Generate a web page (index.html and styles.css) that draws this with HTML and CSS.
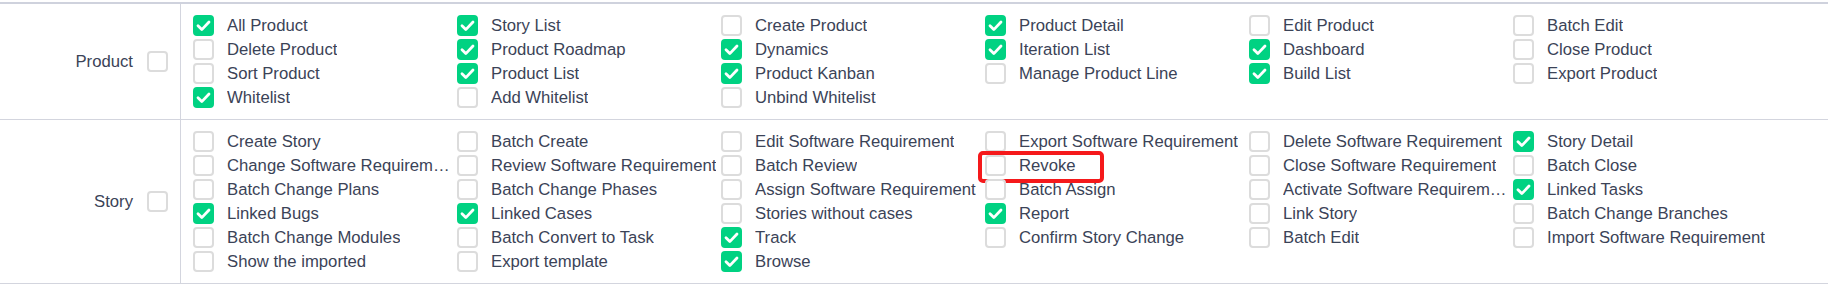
FILE: index.html
```html
<!DOCTYPE html>
<html lang="en">
<head>
  <meta charset="UTF-8" />
  <meta name="viewport" content="width=device-width, initial-scale=1.0"/>
  <title>Privileges</title>
  <link rel="stylesheet" href="styles.css">
</head>
<body>
  <div class="priv-table">
    <div class="priv-row">
      <div class="module">
        <span>Product</span>
        <span class="box"></span>
      </div>
      <div class="items">
        <label class="item on"><span class="box"></span><span class="name">All Product</span></label>
        <label class="item on"><span class="box"></span><span class="name">Story List</span></label>
        <label class="item"><span class="box"></span><span class="name">Create Product</span></label>
        <label class="item on"><span class="box"></span><span class="name">Product Detail</span></label>
        <label class="item"><span class="box"></span><span class="name">Edit Product</span></label>
        <label class="item"><span class="box"></span><span class="name">Batch Edit</span></label>

        <label class="item"><span class="box"></span><span class="name">Delete Product</span></label>
        <label class="item on"><span class="box"></span><span class="name">Product Roadmap</span></label>
        <label class="item on"><span class="box"></span><span class="name">Dynamics</span></label>
        <label class="item on"><span class="box"></span><span class="name">Iteration List</span></label>
        <label class="item on"><span class="box"></span><span class="name">Dashboard</span></label>
        <label class="item"><span class="box"></span><span class="name">Close Product</span></label>

        <label class="item"><span class="box"></span><span class="name">Sort Product</span></label>
        <label class="item on"><span class="box"></span><span class="name">Product List</span></label>
        <label class="item on"><span class="box"></span><span class="name">Product Kanban</span></label>
        <label class="item"><span class="box"></span><span class="name">Manage Product Line</span></label>
        <label class="item on"><span class="box"></span><span class="name">Build List</span></label>
        <label class="item"><span class="box"></span><span class="name">Export Product</span></label>

        <label class="item on"><span class="box"></span><span class="name">Whitelist</span></label>
        <label class="item"><span class="box"></span><span class="name">Add Whitelist</span></label>
        <label class="item"><span class="box"></span><span class="name">Unbind Whitelist</span></label>
      </div>
    </div>

    <div class="priv-row">
      <div class="module">
        <span>Story</span>
        <span class="box"></span>
      </div>
      <div class="items">
        <label class="item"><span class="box"></span><span class="name">Create Story</span></label>
        <label class="item"><span class="box"></span><span class="name">Batch Create</span></label>
        <label class="item"><span class="box"></span><span class="name">Edit Software Requirement</span></label>
        <label class="item"><span class="box"></span><span class="name">Export Software Requirement</span></label>
        <label class="item"><span class="box"></span><span class="name">Delete Software Requirement</span></label>
        <label class="item on"><span class="box"></span><span class="name">Story Detail</span></label>

        <label class="item"><span class="box"></span><span class="name" title="Change Software Requirement">Change Software Requirement</span></label>
        <label class="item"><span class="box"></span><span class="name">Review Software Requirement</span></label>
        <label class="item"><span class="box"></span><span class="name">Batch Review</span></label>
        <label class="item marked"><span class="box"></span><span class="name">Revoke</span></label>
        <label class="item"><span class="box"></span><span class="name">Close Software Requirement</span></label>
        <label class="item"><span class="box"></span><span class="name">Batch Close</span></label>

        <label class="item"><span class="box"></span><span class="name">Batch Change Plans</span></label>
        <label class="item"><span class="box"></span><span class="name">Batch Change Phases</span></label>
        <label class="item"><span class="box"></span><span class="name">Assign Software Requirement</span></label>
        <label class="item"><span class="box"></span><span class="name">Batch Assign</span></label>
        <label class="item"><span class="box"></span><span class="name" title="Activate Software Requirement">Activate Software Requirement</span></label>
        <label class="item on"><span class="box"></span><span class="name">Linked Tasks</span></label>

        <label class="item on"><span class="box"></span><span class="name">Linked Bugs</span></label>
        <label class="item on"><span class="box"></span><span class="name">Linked Cases</span></label>
        <label class="item"><span class="box"></span><span class="name">Stories without cases</span></label>
        <label class="item on"><span class="box"></span><span class="name">Report</span></label>
        <label class="item"><span class="box"></span><span class="name">Link Story</span></label>
        <label class="item"><span class="box"></span><span class="name">Batch Change Branches</span></label>

        <label class="item"><span class="box"></span><span class="name">Batch Change Modules</span></label>
        <label class="item"><span class="box"></span><span class="name">Batch Convert to Task</span></label>
        <label class="item on"><span class="box"></span><span class="name">Track</span></label>
        <label class="item"><span class="box"></span><span class="name">Confirm Story Change</span></label>
        <label class="item"><span class="box"></span><span class="name">Batch Edit</span></label>
        <label class="item"><span class="box"></span><span class="name">Import Software Requirement</span></label>

        <label class="item"><span class="box"></span><span class="name">Show the imported</span></label>
        <label class="item"><span class="box"></span><span class="name">Export template</span></label>
        <label class="item on"><span class="box"></span><span class="name">Browse</span></label>
      </div>
    </div>
  </div>
</body>
</html>
```

FILE: styles.css
```css
body {
  margin: 0;
  padding-top: 2px;
  font-family: "Liberation Sans", Arial, sans-serif;
  font-size: 16.7px;
  color: #3b4357;
  background: #fff;
}

.priv-table {
  border-top: 2px solid #cfd2dd;
}

.priv-row {
  display: flex;
  border-bottom: 1px solid #d3d5de;
}

.module {
  width: 181px;
  flex: none;
  display: flex;
  justify-content: flex-end;
  align-items: center;
  gap: 14px;
  padding-right: 12px;
  box-sizing: border-box;
  border-right: 1px solid #d3d5de;
}

.items {
  display: grid;
  grid-template-columns: repeat(6, 264px);
  padding: 9.5px 0 9.5px 12px;
}

.item {
  display: flex;
  align-items: center;
  height: 24px;
  gap: 13px;
  position: relative;
}

.box {
  width: 21px;
  height: 21px;
  flex: none;
  box-sizing: border-box;
  border: 2px solid #dcdcdc;
  border-radius: 4px;
  background: #fff;
}

.item.on .box {
  border-color: #00d282;
  background: #00d282 url("data:image/svg+xml;utf8,<svg xmlns='http://www.w3.org/2000/svg' viewBox='0 0 21 21'><path d='M5 10.8 L8.8 14.6 L16 7' fill='none' stroke='white' stroke-width='2.8' stroke-linecap='round' stroke-linejoin='round'/></svg>") center / 21px 21px no-repeat;
}

.name {
  max-width: 227px;
  line-height: 24px;
  white-space: nowrap;
  overflow: hidden;
  text-overflow: ellipsis;
}

/* red annotation around one item */
.item.marked::after {
  content: "";
  position: absolute;
  left: -7px;
  top: -3px;
  width: 126px;
  height: 32px;
  box-sizing: border-box;
  border: 4.5px solid #f5191b;
  border-radius: 5px;
}
```
